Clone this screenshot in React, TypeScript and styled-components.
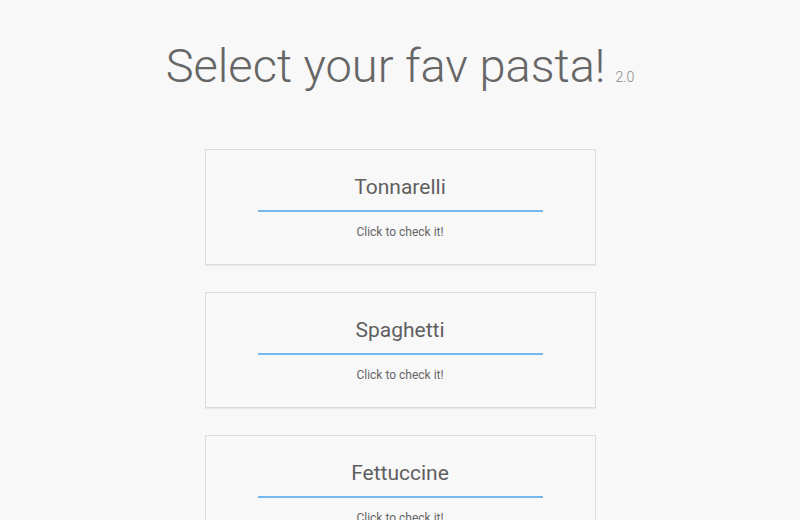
import React from 'react';
import styled, { createGlobalStyle } from 'styled-components';

const GlobalStyle = createGlobalStyle`
  html, body {
    margin: 0;
    padding: 0;
    background: #f8f8f8;
    font-family: Roboto, "Liberation Sans", sans-serif;
    color: #666;
  }
`;

const Page = styled.div`
  display: flex;
  flex-direction: column;
  align-items: center;
  padding-top: 38px;
`;

const Heading = styled.h1`
  margin: 0 0 44px 0;
  font-weight: 300;
  font-size: 47px;
  line-height: 56px;
  color: #666;
`;

const Version = styled.small`
  font-size: 14px;
  font-weight: 300;
  color: #888;
  margin-left: 10px;
`;

const List = styled.div`
  display: flex;
  flex-direction: column;
  gap: 27px;
`;

const Card = styled.div`
  width: 389px;
  height: 114px;
  box-sizing: content-box;
  border: 1px solid #dcdcdc;
  box-shadow: 0 1px 1px rgba(0, 0, 0, 0.06);
  display: flex;
  flex-direction: column;
  align-items: center;
  cursor: pointer;
`;

const Name = styled.div`
  margin-top: 24px;
  font-size: 21px;
  line-height: 26px;
  font-weight: 400;
  color: #5f5f5f;
  width: 285px;
  text-align: center;
  padding-bottom: 10px;
  border-bottom: 2px solid #74b8ee;
`;

const Hint = styled.div`
  margin-top: 12px;
  font-size: 12px;
  line-height: 16px;
  color: #666;
`;

const pastas = ['Tonnarelli', 'Spaghetti', 'Fettuccine'];

export default function App() {
  return (
    <>
      <GlobalStyle />
      <Page>
        <Heading>
          Select your fav pasta!<Version>2.0</Version>
        </Heading>
        <List>
          {pastas.map((p) => (
            <Card key={p}>
              <Name>{p}</Name>
              <Hint>Click to check it!</Hint>
            </Card>
          ))}
        </List>
      </Page>
    </>
  );
}
